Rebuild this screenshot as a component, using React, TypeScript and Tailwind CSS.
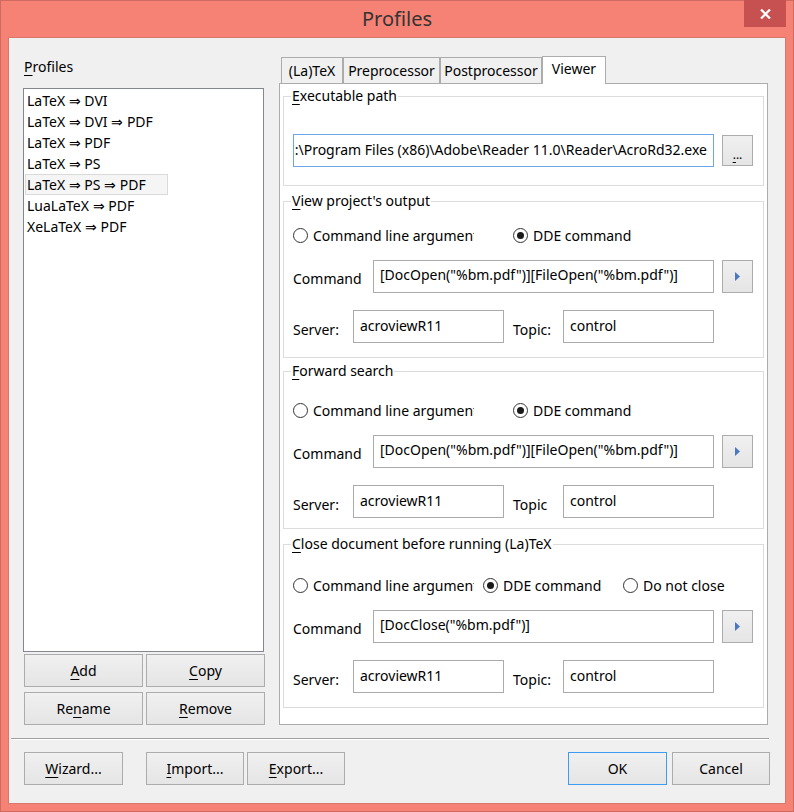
import React from "react";

const FONT = "font-['Segoe_UI','Noto_Sans',sans-serif]";

const profiles = [
  "LaTeX ⇒ DVI",
  "LaTeX ⇒ DVI ⇒ PDF",
  "LaTeX ⇒ PDF",
  "LaTeX ⇒ PS",
  "LaTeX ⇒ PS ⇒ PDF",
  "LuaLaTeX ⇒ PDF",
  "XeLaTeX ⇒ PDF",
];

function Key({ children }: { children: React.ReactNode }) {
  return <span className="underline underline-offset-[3px] decoration-1">{children}</span>;
}

function Button({
  children,
  className = "",
  primary = false,
}: {
  children: React.ReactNode;
  className?: string;
  primary?: boolean;
}) {
  return (
    <div
      className={`flex items-center justify-center h-[33px] bg-linear-to-b from-[#f0f0f0] to-[#e5e5e5] border ${
        primary ? "border-[#3c9bf3]" : "border-[#acacac]"
      } text-[14px] text-black ${className}`}
    >
      {children}
    </div>
  );
}

function Radio({ label, checked = false }: { label: string; checked?: boolean }) {
  return (
    <span className="flex items-center whitespace-nowrap">
      <span className="w-[15px] h-[15px] shrink-0 rounded-full border border-[#333] bg-white flex items-center justify-center">
        {checked && <span className="w-[7px] h-[7px] rounded-full bg-[#1a1a1a]" />}
      </span>
      <span className="ml-[5px]">{label}</span>
    </span>
  );
}

function Group({
  title,
  className,
  children,
}: {
  title: React.ReactNode;
  className: string;
  children: React.ReactNode;
}) {
  return (
    <div className={`relative border border-[#dcdcdc] ${className}`}>
      <span className="absolute -top-[11px] left-[7px] bg-white px-[1px] leading-[20px]">{title}</span>
      {children}
    </div>
  );
}

function Field({ value, className = "" }: { value: string; className?: string }) {
  return (
    <div
      className={`h-[33px] border border-[#ababab] bg-white flex items-center pl-[6px] pb-[3px] whitespace-nowrap overflow-hidden ${className}`}
    >
      {value}
    </div>
  );
}

function ArrowButton() {
  return (
    <div className="ml-[8px] mt-[1px] w-[31px] h-[33px] self-start bg-linear-to-b from-[#f0f0f0] to-[#e5e5e5] border border-[#acacac] flex items-center justify-center">
      <svg width="5" height="9" viewBox="0 0 5 9">
        <path d="M0 0 L5 4.5 L0 9 Z" fill="#4a78c2" />
      </svg>
    </div>
  );
}

function DdeBlock({
  radios,
  command,
  topicLabel,
}: {
  radios: React.ReactNode;
  command: string;
  topicLabel: string;
}) {
  return (
    <div className="pl-[9px]">
      <div className="h-[20px] flex items-center">{radios}</div>
      <div className="mt-[14px] flex items-center">
        <span className="w-[80px] pt-[5px]">Command</span>
        <Field value={command} className="w-[341px]" />
        <ArrowButton />
      </div>
      <div className="mt-[17px] flex items-center">
        <span className="w-[60px] pt-[5px]">Server:</span>
        <Field value="acroviewR11" className="w-[151px]" />
        <span className="ml-[9px] w-[50px] pt-[5px]">{topicLabel}</span>
        <Field value="control" className="w-[151px]" />
      </div>
    </div>
  );
}

const tabs = [
  { label: "(La)TeX", w: "w-[62px]" },
  { label: "Preprocessor", w: "w-[97px]" },
  { label: "Postprocessor", w: "w-[102px]" },
];

export default function App() {
  return (
    <div className={`w-[794px] h-[812px] bg-[#f58275] border border-[#cf6a60] flex flex-col ${FONT} text-[14px] text-black`}>
      {/* title bar */}
      <div className="relative h-[36px] flex items-center justify-center">
        <span className="text-[20px] text-[#333] leading-none">Profiles</span>
        <div className="absolute right-[7px] -top-[1px] w-[42px] h-[27px] bg-[#c75050] flex items-center justify-center">
          <svg width="11" height="10" viewBox="0 0 11 10">
            <path d="M1 0.5 L10 9.5 M10 0.5 L1 9.5" stroke="#fff" strokeWidth="2.2" />
          </svg>
        </div>
      </div>

      {/* client */}
      <div className="mx-[7px] h-[767px] bg-[#f0f0f0] border border-[#d9776b] flex flex-col">
        <div className="flex">
          {/* left column */}
          <div className="ml-[14px] w-[242px] pt-[19px]">
            <div className="ml-[1px] h-[20px] leading-[20px] mb-[11px]">
              <Key>P</Key>rofiles
            </div>
            <div className="w-[241px] h-[564px] bg-white border border-[#828790] pt-[1px]">
              {profiles.map((p, i) => (
                <div
                  key={p}
                  className={`ml-[1px] h-[21px] leading-[19px] pl-[1px] border whitespace-nowrap ${
                    i === 4 ? "w-[143px] bg-[#f5f5f5] border-[#dadada]" : "border-transparent"
                  }`}
                >
                  {p}
                </div>
              ))}
            </div>
            <div className="ml-[1px] mt-[2px] grid grid-cols-[119px_119px] gap-x-[3px] gap-y-[5px]">
              <Button>
                <Key>A</Key>dd
              </Button>
              <Button>
                <Key>C</Key>opy
              </Button>
              <Button>
                Re<Key>n</Key>ame
              </Button>
              <Button>
                <Key>R</Key>emove
              </Button>
            </div>
          </div>

          {/* right column */}
          <div className="ml-[14px] pt-[18px]">
            <div className="flex items-end h-[27px] pl-[2px]">
              {tabs.map((t) => (
                <div
                  key={t.label}
                  className={`${t.w} h-[26px] border border-b-0 border-[#acacac] bg-[#f0f0f0] flex items-center justify-center pb-[1px]`}
                >
                  {t.label}
                </div>
              ))}
              <div className="relative z-10 w-[64px] h-[28px] -mb-px border border-b-0 border-[#acacac] bg-white flex items-start justify-center pt-[1px]">
                Viewer
              </div>
            </div>
            <div className="w-[489px] h-[642px] bg-white border border-[#acacac] pt-[12px] pl-[3px]">
              <Group
                title={
                  <>
                    <Key>E</Key>xecutable path
                  </>
                }
                className="w-[481px] h-[90px] pt-[37px] pl-[9px]"
              >
                <div className="flex items-start">
                  <div className="w-[421px] h-[33px] border border-[#6aa6e8] bg-white flex items-center justify-end pr-[6px] pb-[3px] whitespace-nowrap overflow-hidden">
                    C:\Program Files (x86)\Adobe\Reader 11.0\Reader\AcroRd32.exe
                  </div>
                  <div className="ml-[8px] mt-[1px] w-[31px] h-[31px] bg-linear-to-b from-[#f0f0f0] to-[#e5e5e5] border border-[#acacac] flex items-end justify-center pb-[4px] text-[12px] leading-none">
                    <span>
                      <Key>.</Key>..
                    </span>
                  </div>
                </div>
              </Group>

              <Group
                title={
                  <>
                    <Key>V</Key>iew project's output
                  </>
                }
                className="mt-[15px] w-[481px] h-[157px] pt-[23px]"
              >
                <DdeBlock
                  radios={
                    <>
                      <div className="w-[181px] overflow-hidden">
                        <Radio label="Command line argument" />
                      </div>
                      <div className="ml-[39px]">
                        <Radio label="DDE command" checked />
                      </div>
                    </>
                  }
                  command={'[DocOpen("%bm.pdf")][FileOpen("%bm.pdf")]'}
                  topicLabel="Topic:"
                />
              </Group>

              <Group
                title={
                  <>
                    <Key>F</Key>orward search
                  </>
                }
                className="mt-[13px] w-[481px] h-[158px] pt-[28px]"
              >
                <DdeBlock
                  radios={
                    <>
                      <div className="w-[181px] overflow-hidden">
                        <Radio label="Command line argument" />
                      </div>
                      <div className="ml-[39px]">
                        <Radio label="DDE command" checked />
                      </div>
                    </>
                  }
                  command={'[DocOpen("%bm.pdf")][FileOpen("%bm.pdf")]'}
                  topicLabel="Topic"
                />
              </Group>

              <Group
                title={
                  <>
                    <Key>C</Key>lose document before running (La)TeX
                  </>
                }
                className="mt-[15px] w-[481px] h-[164px] pt-[30px]"
              >
                <DdeBlock
                  radios={
                    <>
                      <div className="w-[181px] overflow-hidden">
                        <Radio label="Command line argument" />
                      </div>
                      <div className="ml-[9px] w-[140px]">
                        <Radio label="DDE command" checked />
                      </div>
                      <Radio label="Do not close" />
                    </>
                  }
                  command={'[DocClose("%bm.pdf")]'}
                  topicLabel="Topic:"
                />
              </Group>
            </div>
          </div>
        </div>

        {/* separator */}
        <div className="ml-[2px] mt-[13px] w-[758px] border-t border-[#a0a0a0] border-b border-b-white" />

        {/* bottom buttons */}
        <div className="mt-[12px] flex">
          <Button className="ml-[15px] w-[99px]">
            <Key>W</Key>izard...
          </Button>
          <Button className="ml-[23px] w-[98px]">
            <Key>I</Key>mport...
          </Button>
          <Button className="ml-[3px] w-[98px]">
            <Key>E</Key>xport...
          </Button>
          <Button primary className="ml-auto w-[99px]">
            OK
          </Button>
          <Button className="ml-[5px] mr-[15px] w-[98px]">Cancel</Button>
        </div>
      </div>
    </div>
  );
}
